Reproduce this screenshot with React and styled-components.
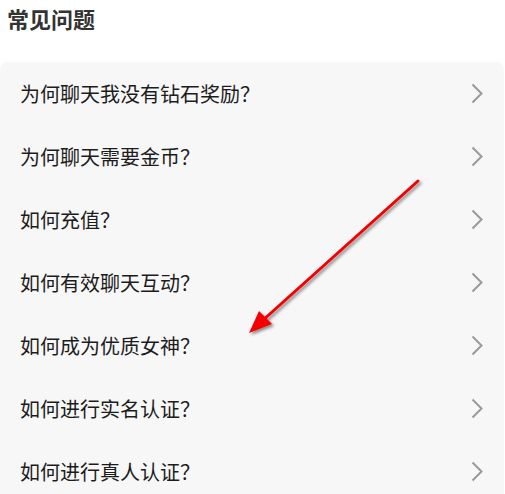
import styled, { createGlobalStyle } from "styled-components";

const GlobalStyle = createGlobalStyle`
  body {
    margin: 0;
    background: #fff;
    font-family: "Noto Sans CJK SC", "Noto Sans", sans-serif;
  }
`;

const questions = [
  "为何聊天我没有钻石奖励？",
  "为何聊天需要金币？",
  "如何充值？",
  "如何有效聊天互动？",
  "如何成为优质女神？",
  "如何进行实名认证？",
  "如何进行真人认证？",
];

const Page = styled.div`
  position: relative;
  width: 505px;
  height: 494px;
  overflow: hidden;
`;

const Title = styled.h2`
  margin: 0;
  height: 62px;
  padding: 2px 0 0 7px;
  box-sizing: border-box;
  font-size: 22px;
  font-weight: 700;
  line-height: 32px;
  color: #333;
`;

const Card = styled.ul`
  list-style: none;
  margin: 0;
  padding: 0;
  width: 504px;
  background: #f7f7f7;
  border-radius: 8px 8px 0 0;
`;

const Row = styled.li`
  display: flex;
  align-items: center;
  justify-content: space-between;
  height: 63px;
  padding: 0 21px 0 20px;
  font-size: 20px;
  color: #1c1c1c;
`;

const Chevron = () => (
  <svg width="12" height="21" viewBox="0 0 12 21">
    <path d="M1.5 1.5 L10.5 10.5 L1.5 19.5" fill="none" stroke="#9a9a9a" strokeWidth="2" />
  </svg>
);

const Annotation = styled.svg`
  position: absolute;
  left: 0;
  top: 0;
  pointer-events: none;
`;

export default function App() {
  return (
    <Page>
      <GlobalStyle />
      <Title>常见问题</Title>
      <Card>
        {questions.map((q) => (
          <Row key={q}>
            <span>{q}</span>
            <Chevron />
          </Row>
        ))}
      </Card>
      <Annotation width="505" height="494" viewBox="0 0 505 494">
        <defs>
          <filter id="sh" x="-20%" y="-20%" width="140%" height="140%">
            <feDropShadow dx="2" dy="2" stdDeviation="1.5" floodColor="#000" floodOpacity="0.45" />
          </filter>
        </defs>
        <g filter="url(#sh)">
          <line x1="418" y1="181" x2="262" y2="321" stroke="#f40000" strokeWidth="3" strokeLinecap="round" />
          <polygon points="249,333 259,311 272,324" fill="#f40000" />
        </g>
      </Annotation>
    </Page>
  );
}
